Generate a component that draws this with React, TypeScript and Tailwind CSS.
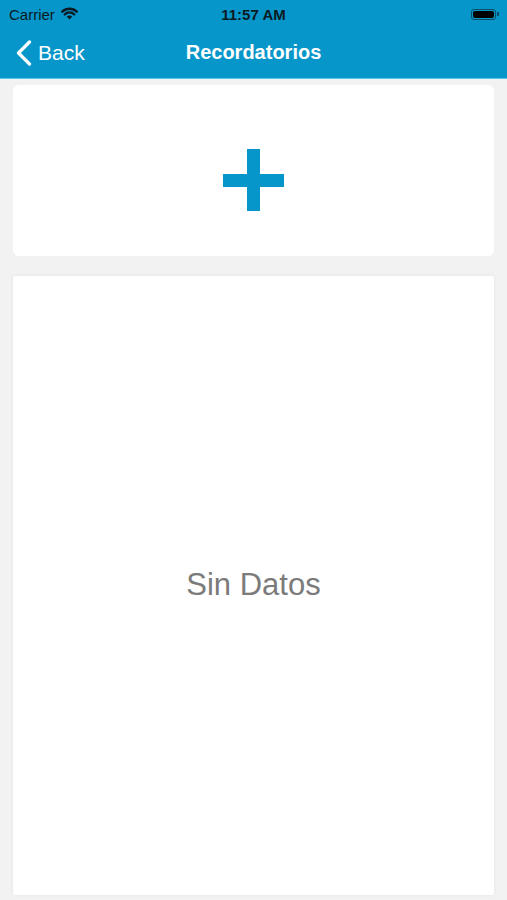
import React from "react";

export default function App() {
  return (
    <div
      className="w-[507px] h-[900px] bg-[#f2f2f2] flex flex-col overflow-hidden"
      style={{ fontFamily: '"Liberation Sans", Arial, sans-serif' }}
    >
      <div className="bg-[#0796ca] border-b border-[#5cc3ea] h-[79px] flex flex-col">
        <div className="h-[28px] relative flex items-center">
          <div className="flex items-center pl-[9px] gap-[6px] text-[15px] text-[#0b1a22] leading-none">
            <span>Carrier</span>
            <svg width="17" height="13" viewBox="0 0 16 12" className="mt-[-1px]">
              <path d="M8 11.6 L5.4 8.9 A3.6 3.6 0 0 1 10.6 8.9 Z" fill="#0b1a22" />
              <path d="M3.5 6.9 A6.3 6.3 0 0 1 12.5 6.9" stroke="#0b1a22" strokeWidth="2.2" fill="none" strokeLinecap="round" />
              <path d="M1.2 4.3 A9.7 9.7 0 0 1 14.8 4.3" stroke="#0b1a22" strokeWidth="2.2" fill="none" strokeLinecap="round" />
            </svg>
          </div>
          <div className="absolute left-0 right-0 text-center text-[15px] font-bold text-[#0b1a22] leading-none pointer-events-none">
            11:57 AM
          </div>
          <div className="ml-auto pr-[8px] flex items-center">
            <div className="w-[25px] h-[11px] rounded-[3px] border border-[#0b4d66] p-[1px]">
              <div className="w-full h-full bg-black rounded-[2px]" />
            </div>
            <div className="w-[2px] h-[4px] bg-[#0b4d66] rounded-r-[1px] ml-[1px]" />
          </div>
        </div>
        <div className="h-[50px] relative flex items-center">
          <div className="flex items-center pl-[16px] gap-[6px] text-white text-[21px] leading-none">
            <svg width="16" height="26" viewBox="0 0 16 26">
              <path d="M13.5 2 L2.5 13 L13.5 24" stroke="white" strokeWidth="3.2" fill="none" strokeLinecap="round" strokeLinejoin="round" />
            </svg>
            <span className="mt-[-1px]">Back</span>
          </div>
          <div className="absolute left-0 right-0 text-center text-white text-[20px] font-bold leading-none mt-[-2px] pointer-events-none">
            Recordatorios
          </div>
        </div>
      </div>
      <div className="flex flex-col px-[13px] pt-[6px] gap-[20px]">
        <div className="h-[171px] bg-white rounded-[6px] flex items-center justify-center pt-[19px]">
          <div className="relative w-[61px] h-[62px]">
            <div className="absolute left-[24px] top-0 w-[13px] h-[62px] bg-[#0796ca]" />
            <div className="absolute left-0 top-[25px] w-[61px] h-[13px] bg-[#0796ca]" />
          </div>
        </div>
        <div className="h-[619px] bg-white rounded-[2px] shadow-[0_0_4px_rgba(0,0,0,0.06)] flex items-center justify-center">
          <span className="text-[31px] text-[#7b7b7b] leading-none mt-[-2px]">Sin Datos</span>
        </div>
      </div>
    </div>
  );
}
